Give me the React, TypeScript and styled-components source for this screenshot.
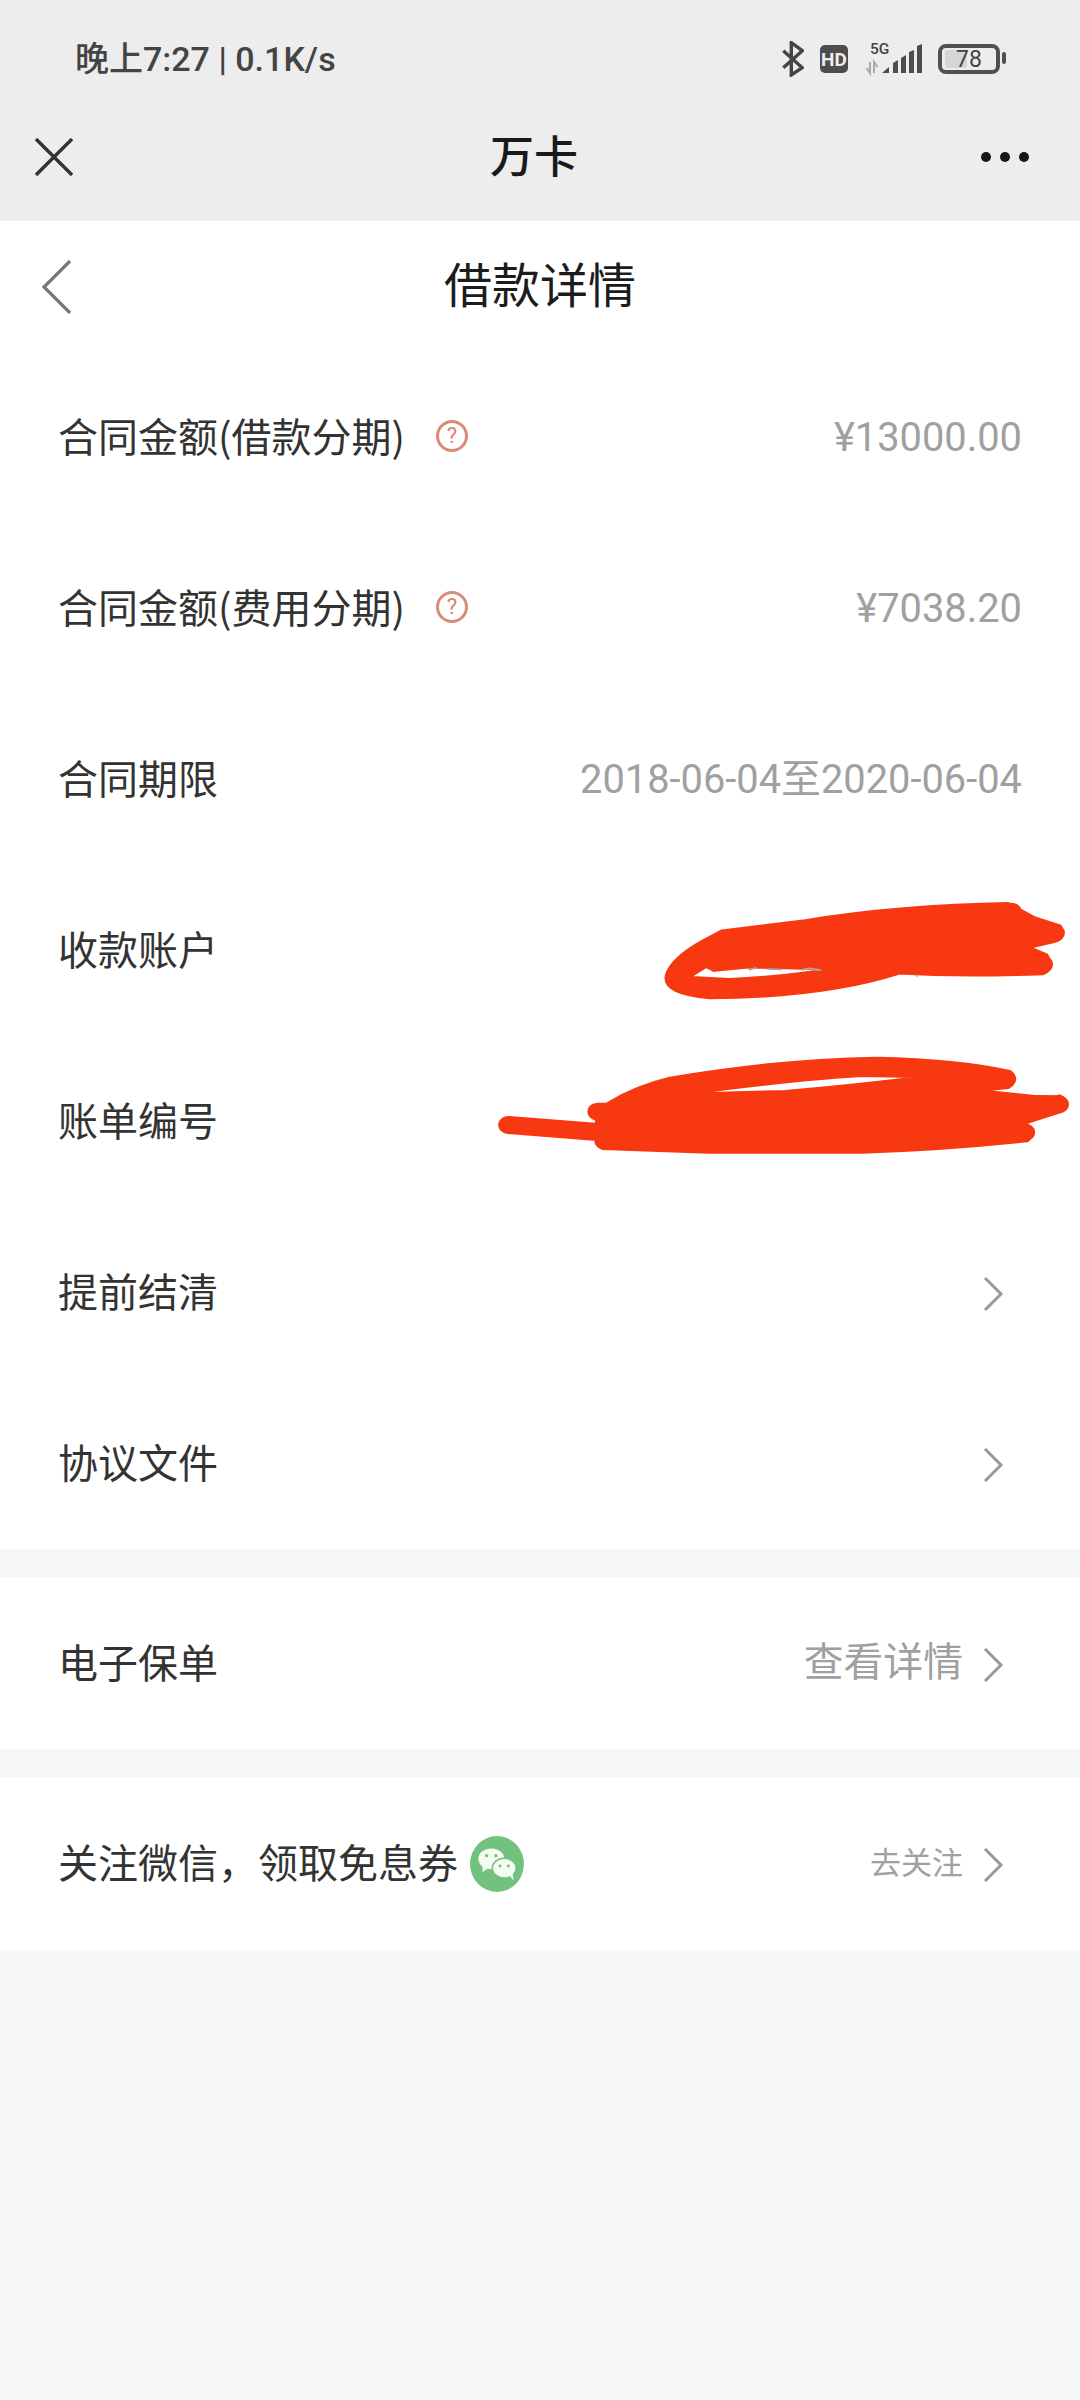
// App.tsx
import React from "react";
import styled, { createGlobalStyle } from "styled-components";

const GlobalStyle = createGlobalStyle`
  html, body {
    margin: 0;
    padding: 0;
    background: #f6f7f9;
    font-family: "Roboto", "Noto Sans CJK SC", sans-serif;
  }
`;

const Page = styled.div`
  width: 1080px;
  height: 2400px;
  overflow: hidden;
  background: #f6f7f9;
`;

const Top = styled.header`
  background: #ededed;
  height: 221px;
`;

const StatusBar = styled.div`
  height: 118px;
  padding: 0 80px 0 75px;
  display: flex;
  align-items: center;
  justify-content: space-between;
`;

const Clock = styled.span`
  font-size: 34px;
  line-height: 1;
  font-weight: 500;
  color: #444;
  white-space: nowrap;
  font-family: "Roboto", "Noto Sans CJK SC", sans-serif;
`;

const StatusIcons = styled.div`
  display: flex;
  align-items: center;
`;

const HdBadge = styled.span`
  width: 28px;
  height: 28px;
  margin-left: 16px;
  margin-right: 17px;
  border-radius: 5px;
  background: #4d4d4d;
  color: #ededed;
  font-size: 19px;
  font-weight: 700;
  display: flex;
  align-items: center;
  justify-content: center;
`;

const Battery = styled.div`
  position: relative;
  box-sizing: border-box;
  width: 62px;
  height: 30px;
  margin-left: 13px;
  border: 4px solid #505050;
  border-radius: 8px;
  display: flex;
  align-items: center;
  justify-content: center;
  font-size: 23px;
  color: #444;

  &::after {
    content: "";
    position: absolute;
    right: -10px;
    top: 4px;
    width: 4px;
    height: 12px;
    border-radius: 2px;
    background: #505050;
  }
`;

const BatteryFill = styled.span`
  position: absolute;
  left: 3px;
  top: 2px;
  bottom: 2px;
  width: 22px;
  border-radius: 2px;
  background: #d6d6d6;
`;

const BatteryText = styled.span`
  position: relative;
`;

const ToolBar = styled.div`
  height: 103px;
  box-sizing: border-box;
  padding: 0 47px 25px 35px;
  display: grid;
  grid-template-columns: 1fr auto 1fr;
  align-items: center;
`;

const ToolTitle = styled.h1`
  margin: 0 0 5px;
  font-size: 44px;
  line-height: 1.2;
  font-weight: 500;
  color: #1a1a1a;
  font-family: "Noto Sans CJK SC", sans-serif;
`;

const Dots = styled.div`
  justify-self: end;
  margin-right: 4px;
  display: flex;
  gap: 9px;
`;

const Dot = styled.span`
  width: 10px;
  height: 10px;
  border-radius: 50%;
  background: #151515;
`;

const NavBar = styled.nav`
  background: #fff;
  height: 131px;
  box-sizing: border-box;
  padding-left: 42px;
  display: grid;
  grid-template-columns: 1fr auto 1fr;
  align-items: center;
`;

const NavTitle = styled.h2`
  margin: 0 0 8px -42px;
  font-size: 48px;
  line-height: 1.2;
  font-weight: 400;
  color: #1c1c1c;
  font-family: "Noto Sans CJK SC", sans-serif;
`;

const Section = styled.section`
  background: #fff;
  margin-bottom: 28px;
`;

const Row = styled.div<{ $height?: number }>`
  height: ${(p) => p.$height ?? 171}px;
  padding: 0 58px;
  display: flex;
  align-items: center;
  justify-content: space-between;
`;

const Left = styled.div`
  display: flex;
  align-items: center;
`;

const Label = styled.span`
  font-size: 40px;
  line-height: 1.2;
  margin-bottom: 5px;
  color: #333;
  white-space: nowrap;
  font-family: "Noto Sans CJK SC", sans-serif;
`;

const Help = styled.span`
  width: 32px;
  height: 32px;
  box-sizing: border-box;
  margin-left: 31px;
  margin-bottom: 4px;
  border: 3px solid #dc8a78;
  border-radius: 50%;
  color: #d98271;
  font-size: 22px;
  display: flex;
  align-items: center;
  justify-content: center;
`;

const Value = styled.span<{ $small?: boolean }>`
  font-size: ${(p) => (p.$small ? 31 : 39.85)}px;
  line-height: 1;
  color: #a0a0a0;
  white-space: nowrap;
  font-family: "Roboto", "Noto Sans CJK SC", sans-serif;
`;

const Right = styled.div`
  display: flex;
  align-items: center;
`;

const ChevronIcon = styled.svg`
  width: 22px;
  height: 36px;
  margin: 3px 18px 0 19px;
`;

const WechatIcon = styled.svg`
  width: 56px;
  height: 56px;
  margin-left: 11px;
`;

const Scribble = styled.svg<{ $right: number; $lift?: number }>`
  display: block;
  margin-right: ${(p) => p.$right}px;
  margin-bottom: ${(p) => p.$lift ?? 0}px;
`;

const Chevron = () => (
  <ChevronIcon viewBox="0 0 22 36" fill="none" stroke="#999" strokeWidth="3">
    <path d="M3 2 L19 18 L3 34" />
  </ChevronIcon>
);

const Bluetooth = () => (
  <svg width="22" height="36" viewBox="0 0 22 36" fill="none" stroke="#444" strokeWidth="3.4">
    <path d="M1.3 9.7 L20.3 26.7 L9.3 34 V1.7 L20.3 9.7 L1.3 26.7" />
  </svg>
);

const Signal = () => (
  <svg width="60" height="40" viewBox="0 -3 60 40">
    <text x="5" y="12" fontSize="15.5" fontWeight="500" fill="#444" fontFamily="Roboto, sans-serif">
      5G
    </text>
    <path d="M5 20 V31 L1.5 26 M9 31 V20 L12.5 25" fill="none" stroke="#aaa" strokeWidth="2" />
    <path
      fill="#4d4d4d"
      d="M17 31 L24 25 V31 Z M28 31 V21 L33 18 V31 Z M36 31 V16 L41 13 V31 Z M44 31 V10 L49 8 V31 Z M52 31 V4 L57 2 V31 Z"
    />
  </svg>
);

const ScribbleOne = () => (
  <Scribble
    $right={-46}
    width="406"
    height="102"
    viewBox="475 118 1062 298"
    preserveAspectRatio="none"
  >
    <path
      fill="#f73811"
      stroke="#f73811"
      strokeWidth="12"
      strokeLinejoin="round"
      fillRule="evenodd"
      d="M632 210 L850 180 Q1100 135 1380 130 L1450 172 L1515 195 Q1530 230 1500 238 L1430 256 L1480 280 Q1500 320 1470 332 Q1250 340 1095 330 Q900 400 600 402 Q480 390 488 340 Q500 290 585 238 Z
         M540 345 L590 310 L612 322 L700 312 L930 318 Q800 345 650 352 Z"
    />
    <path
      fill="none"
      stroke="#f73811"
      strokeWidth="52"
      strokeLinecap="round"
      d="M650 232 L900 222 M618 292 L900 282 M1300 212 L1503 214 M1200 306 L1472 306 M1300 170 L1390 152"
    />
    <path
      fill="none"
      stroke="#a9a9a9"
      strokeWidth="5"
      d="M702 322 L722 316 M750 320 L790 321 M840 322 L860 318 L890 323 M1140 336 L1142 342"
    />
  </Scribble>
);

const ScribbleTwo = () => (
  <Scribble
    $right={-49}
    $lift={34}
    width="574"
    height="100"
    viewBox="50 585 1494 300"
    preserveAspectRatio="none"
  >
    <path
      fill="#f73811"
      stroke="#f73811"
      strokeWidth="10"
      strokeLinejoin="round"
      fillRule="evenodd"
      d="M310 750 L340 730 Q410 680 500 655 Q780 600 1040 595 Q1250 600 1385 635 Q1410 660 1380 682 L1300 692 L1490 715 L1515 708 Q1545 730 1515 755 L1420 790 Q1455 815 1430 842 Q1200 870 1000 876 L600 876 L325 865 L310 840 L310 790 Z
         M530 703 Q800 660 1000 646 L1170 650 Q1000 675 800 695 Z"
    />
    <path
      fill="none"
      stroke="#f73811"
      strokeWidth="54"
      strokeLinecap="round"
      d="M80 795 L320 817 M312 755 L620 755 M330 842 L700 850 M1300 730 L1512 733 M1200 820 L1424 817"
    />
  </Scribble>
);

const Wechat = () => (
  <WechatIcon viewBox="0 0 52 54">
    <ellipse cx="26" cy="27" rx="26" ry="27" fill="#72c27d" />
    <ellipse cx="20.5" cy="22" rx="12.5" ry="10" fill="#f4faf4" />
    <path d="M12 28 L12 35 L19 30 Z" fill="#f4faf4" />
    <ellipse cx="33" cy="31" rx="11.5" ry="9.5" fill="#f4faf4" stroke="#72c27d" strokeWidth="1.5" />
    <path d="M38 38 L42 43 L41 35 Z" fill="#f4faf4" />
    <circle cx="16" cy="19" r="1.6" fill="#72c27d" />
    <circle cx="25" cy="19" r="1.6" fill="#72c27d" />
    <circle cx="29" cy="29" r="1.4" fill="#72c27d" />
    <circle cx="37" cy="29" r="1.4" fill="#72c27d" />
  </WechatIcon>
);

const App: React.FC = () => {
  return (
    <Page>
      <GlobalStyle />
      <Top>
        <StatusBar>
          <Clock>晚上7:27 | 0.1K/s</Clock>
          <StatusIcons>
            <Bluetooth />
            <HdBadge>HD</HdBadge>
            <Signal />
            <Battery>
              <BatteryFill />
              <BatteryText>78</BatteryText>
            </Battery>
          </StatusIcons>
        </StatusBar>
        <ToolBar>
          <svg width="38" height="38" viewBox="0 0 38 38" stroke="#333" strokeWidth="3.4">
            <path d="M1 1 L37 37 M37 1 L1 37" />
          </svg>
          <ToolTitle>万卡</ToolTitle>
          <Dots>
            <Dot />
            <Dot />
            <Dot />
          </Dots>
        </ToolBar>
      </Top>

      <NavBar>
        <svg width="30" height="54" viewBox="0 0 30 54" fill="none" stroke="#777" strokeWidth="3.2">
          <path d="M28 1 L2 27 L28 53" />
        </svg>
        <NavTitle>借款详情</NavTitle>
      </NavBar>

      <Section>
        <Row>
          <Left>
            <Label>合同金额(借款分期)</Label>
            <Help>?</Help>
          </Left>
          <Value>¥13000.00</Value>
        </Row>
        <Row>
          <Left>
            <Label>合同金额(费用分期)</Label>
            <Help>?</Help>
          </Left>
          <Value>¥7038.20</Value>
        </Row>
        <Row>
          <Label>合同期限</Label>
          <Value>2018-06-04至2020-06-04</Value>
        </Row>
        <Row>
          <Label>收款账户</Label>
          <ScribbleOne />
        </Row>
        <Row>
          <Label>账单编号</Label>
          <ScribbleTwo />
        </Row>
        <Row>
          <Label>提前结清</Label>
          <Chevron />
        </Row>
        <Row>
          <Label>协议文件</Label>
          <Chevron />
        </Row>
      </Section>

      <Section>
        <Row $height={172}>
          <Label>电子保单</Label>
          <Right>
            <Value>查看详情</Value>
            <Chevron />
          </Right>
        </Row>
      </Section>

      <Section>
        <Row $height={173}>
          <Left>
            <Label>关注微信，领取免息券</Label>
            <Wechat />
          </Left>
          <Right>
            <Value $small>去关注</Value>
            <Chevron />
          </Right>
        </Row>
      </Section>
    </Page>
  );
};

export default App;
